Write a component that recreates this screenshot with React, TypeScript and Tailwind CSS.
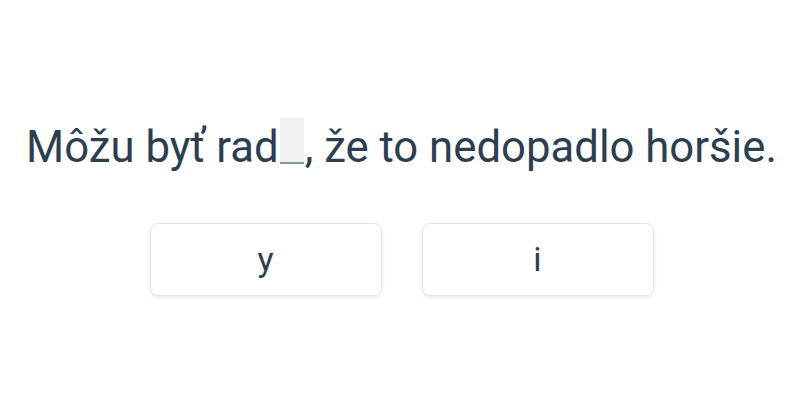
export default function App() {
  return (
    <div className="w-[800px] h-[400px] bg-white flex flex-col items-center font-['Roboto',sans-serif] text-[#2c3e50]">
      <div className="mt-[118px] h-[46px] flex items-end text-[43.7px] leading-[46px] whitespace-nowrap pl-[3px]">
        <span className="relative top-[6px]">Môžu byť rad</span>
        <span className="inline-block w-[24px] h-[46px] bg-[#eef0f2] border-b-2 border-[#8a9a9a] mx-[1px]"></span>
        <span className="relative top-[6px]">, že to nedopadlo horšie.</span>
      </div>
      <div className="mt-[59px] flex gap-[40px] pl-[3px]">
        <button className="w-[232px] h-[73px] rounded-lg bg-white border border-[#e2e4e7] shadow-[0_2px_4px_rgba(0,0,0,0.08)] text-[34px] text-[#2c3e50] flex items-center justify-center">
          y
        </button>
        <button className="w-[232px] h-[73px] rounded-lg bg-white border border-[#e2e4e7] shadow-[0_2px_4px_rgba(0,0,0,0.08)] text-[34px] text-[#2c3e50] flex items-center justify-center">
          i
        </button>
      </div>
    </div>
  );
}
